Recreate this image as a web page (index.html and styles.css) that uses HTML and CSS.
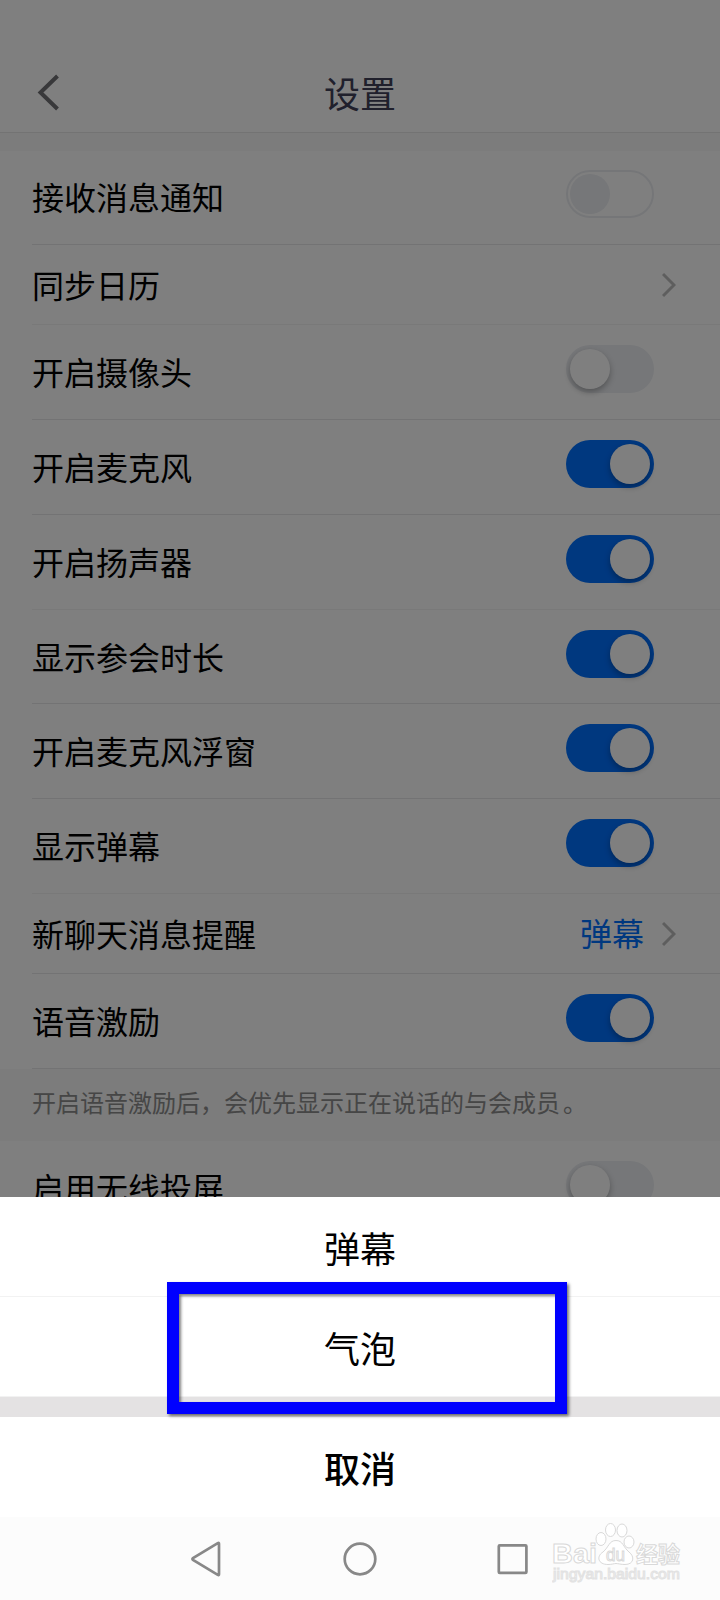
FILE: index.html
```html
<!DOCTYPE html>
<html lang="zh-CN">
<head>
<meta charset="utf-8">
<title>设置</title>
<link rel="stylesheet" href="styles.css">
</head>
<body>
<div class="screen">
  <main class="settings">
    <header class="header">
      <svg class="back" width="24" height="40" viewBox="0 0 24 40"><path d="M20.5 4 3.5 20.500 20.500 37" fill="none" stroke="#707074" stroke-width="4"/></svg>
      <h1 class="title">设置</h1>
    </header>
    <div class="band"></div>
    <ul class="list">
      <li class="row first"><span>接收消息通知</span><i class="toggle disabled"></i></li>
      <li class="row link faint"><span>同步日历</span><svg class="arrow" width="14" height="26" viewBox="0 0 14 26"><path d="M1 2 12 13 1 24"/></svg></li>
      <li class="row"><span>开启摄像头</span><i class="toggle"></i></li>
      <li class="row"><span>开启麦克风</span><i class="toggle on"></i></li>
      <li class="row faint"><span>开启扬声器</span><i class="toggle on"></i></li>
      <li class="row"><span>显示参会时长</span><i class="toggle on"></i></li>
      <li class="row"><span>开启麦克风浮窗</span><i class="toggle on"></i></li>
      <li class="row faint"><span>显示弹幕</span><i class="toggle on"></i></li>
      <li class="row link"><span>新聊天消息提醒</span><b class="value">弹幕</b><svg class="arrow" width="14" height="26" viewBox="0 0 14 26"><path d="M1 2 12 13 1 24"/></svg></li>
      <li class="row"><span>语音激励</span><i class="toggle on"></i></li>
    </ul>
    <p class="note">开启语音激励后，会优先显示正在说话的与会成员<span class="stop">。</span></p>
    <ul class="list">
      <li class="row"><span>启用无线投屏</span><i class="toggle"></i></li>
    </ul>
    <div class="dim"></div>
  </main>
  <section class="sheet">
    <button class="option">弹幕</button>
    <button class="option">气泡</button>
    <div class="gap"></div>
    <button class="option cancel">取消</button>
    <div class="highlight"></div>
  </section>
  <nav class="navbar">
    <svg width="34" height="40" viewBox="0 0 34 40"><path d="M29 4.800V35.200Q29 36.500 27.800 35.800L3 21Q1.800 20 3 19L27.800 4.200Q29 3.500 29 4.800Z"/></svg>
    <svg width="40" height="40" viewBox="0 0 40 40"><circle cx="20" cy="20" r="15.300"/></svg>
    <svg width="34" height="40" viewBox="0 0 34 40"><rect x="2.800" y="6.300" width="27.600" height="27.600" rx="1"/></svg>
    <svg class="watermark" width="136" height="66" viewBox="0 0 136 66">
      <g>
        <text x="0" y="41" font-size="28" font-weight="700" textLength="45" lengthAdjust="spacingAndGlyphs">Bai</text>
        <path d="M64 18.500C57 18.500 57 25 51 30C44 34.500 46 42.500 56 42.500C60 42.500 62 41.500 64 41.500S69 42.500 73 42.500C82 42.500 83 34.500 77 30C71 25 71 18.500 64 18.500Z"/>
        <ellipse cx="49" cy="17" rx="5" ry="6.500"/>
        <ellipse cx="58.500" cy="8" rx="5" ry="6.500"/>
        <ellipse cx="70" cy="8.500" rx="5" ry="6.500"/>
        <ellipse cx="77" cy="20" rx="5" ry="6"/>
        <text x="54" y="39" font-size="18" textLength="19" lengthAdjust="spacingAndGlyphs">du</text>
        <text x="84" y="39.500" font-size="22" font-weight="700" textLength="44">经验</text>
        <text class="url" x="1" y="57" font-size="14" textLength="127" lengthAdjust="spacingAndGlyphs">jingyan.baidu.com</text>
      </g>
    </svg>
  </nav>
</div>
</body>
</html>
```
FILE: styles.css
```css
* { box-sizing: border-box; margin: 0; padding: 0; }

body {
  font-family: "Noto Sans CJK SC", sans-serif;
  background: #fff;
}

.screen {
  width: 720px;
  height: 1600px;
  display: flex;
  flex-direction: column;
  overflow: hidden;
}

.settings {
  position: relative;
  height: 1197px;
  overflow: hidden;
  background: #fff;
}

.dim {
  position: absolute;
  inset: 0;
  background: rgba(0, 0, 0, 0.5);
}

.header {
  display: grid;
  grid-template-columns: 100px 1fr 100px;
  align-items: center;
  height: 133px;
  padding-top: 52px;
  border-bottom: 1px solid #e6e6e6;
}

.back { margin: 0 0 0 37px; }

.title {
  font-size: 36px;
  line-height: 52px;
  font-weight: 400;
  color: #404058;
  text-align: center;
}

.band { height: 17.7px; background: #f8f8f8; }

.list { list-style: none; }

.row {
  display: flex;
  height: 94.75px;
  margin-left: 32px;
  padding-right: 66px;
  border-bottom: 1px solid #e6e6e8;
  font-size: 32px;
  line-height: 92px;
  color: #000;
}

.row.first { line-height: 90px; }

.row.faint { border-bottom-color: #f2f2f3; }

.row span { flex: 1; }

.row.link {
  height: 80px;
  padding-right: 44px;
  line-height: 79px;
}

.toggle {
  width: 88px;
  height: 48px;
  margin-top: 20px;
  padding: 4px;
  border-radius: 24px;
  background: #eceef2;
}

.toggle::before {
  content: "";
  display: block;
  width: 40px;
  height: 40px;
  border-radius: 50%;
  background: #fff;
  box-shadow: 0 3px 6px rgba(0, 0, 0, 0.3);
}

.toggle.on { background: #0070ff; }
.toggle.on::before { margin-left: 40px; }

.toggle.disabled {
  margin-top: 19px;
  padding: 2px;
  border: 2px solid #ebedf1;
  background: #fff;
}

.toggle.disabled::before { background: #eceef2; box-shadow: none; }

.value {
  margin-right: 18px;
  font-weight: 400;
  color: #0070ff;
  line-height: 76px;
}

.arrow {
  margin-top: 27px;
  fill: none;
  stroke: #bcbcbc;
  stroke-width: 3;
}

.note {
  height: 72px;
  padding-left: 32px;
  background: #f8f8f8;
  font-size: 24px;
  line-height: 65px;
  color: #8c8c8c;
}

.stop { margin-left: 3px; }

.sheet {
  position: relative;
  height: 320px;
}

.option {
  display: block;
  width: 100%;
  height: 100px;
  border: 0;
  border-bottom: 1px solid #f2f2f2;
  background: #fff;
  font: 400 36px/98px "Noto Sans CJK SC", sans-serif;
  color: #000;
}

.option.cancel { font-weight: 500; border: 0; }

.gap { height: 20px; background: #e4e2e3; }

.highlight {
  position: absolute;
  left: 167px;
  top: 85px;
  width: 400px;
  height: 132px;
  border: 12px solid #00f;
  box-shadow: 2px 2px 3px rgba(0, 0, 0, 0.55), inset 2px 2px 3px rgba(0, 0, 0, 0.5);
}

.navbar {
  display: flex;
  height: 83px;
  padding: 21.5px 0 0 190px;
  background: #fcfcfc;
}

.navbar svg {
  flex: none;
  fill: none;
  stroke: #888;
  stroke-width: 2.7;
}

.navbar svg:nth-child(2) { margin-left: 116px; }
.navbar svg:nth-child(3) { margin-left: 116px; }

.navbar .watermark {
  margin: -16.5px 0 0 22px;
  fill: #fff;
  stroke: #d9d9d9;
  stroke-width: 1;
  font-family: "Liberation Sans", "Noto Sans CJK SC", sans-serif;
}

.watermark .url { stroke: #e2e2e2; }
```
